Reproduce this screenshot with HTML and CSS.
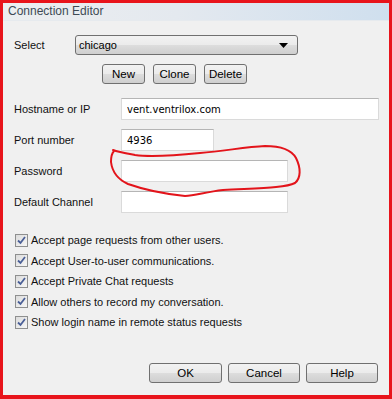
FILE: index.html
```html
<!DOCTYPE html>
<html lang="en">
<head>
  <meta charset="UTF-8">
  <title>Connection Editor</title>
  <link rel="stylesheet" href="styles.css">
</head>
<body>
  <div class="window">
    <!-- Title bar -->
    <div class="titlebar">Connection Editor</div>

    <div class="content">
      <div class="select-row">
        <span class="label select-label">Select</span>
        <div class="combo">
          <span>chicago</span>
          <svg class="combo-arrow" width="9" height="5" viewBox="0 0 9 5"><path d="M0 0h9L4.5 5z" fill="#000"/></svg>
        </div>
      </div>

      <div class="btn-row">
        <button class="btn">New</button>
        <button class="btn">Clone</button>
        <button class="btn">Delete</button>
      </div>

      <div class="fields">
        <label class="label" for="host">Hostname or IP</label>
        <input class="field field-long" type="text" id="host" value="vent.ventrilox.com">

        <label class="label" for="port">Port number</label>
        <input class="field field-short" type="text" id="port" value="4936">

        <label class="label" for="pass">Password</label>
        <input class="field field-mid" type="password" id="pass">

        <label class="label" for="chan">Default Channel</label>
        <input class="field field-mid" type="text" id="chan">
      </div>

      <div class="checks">
        <div class="check"><span class="box"><svg width="9" height="9" viewBox="0 0 9 9"><path d="M1 4.5l2.5 2.5L8 1" fill="none" stroke="#4a5f97" stroke-width="1.8"/></svg></span>Accept page requests from other users.</div>
        <div class="check"><span class="box"><svg width="9" height="9" viewBox="0 0 9 9"><path d="M1 4.5l2.5 2.5L8 1" fill="none" stroke="#4a5f97" stroke-width="1.8"/></svg></span>Accept User-to-user communications.</div>
        <div class="check"><span class="box"><svg width="9" height="9" viewBox="0 0 9 9"><path d="M1 4.5l2.5 2.5L8 1" fill="none" stroke="#4a5f97" stroke-width="1.8"/></svg></span>Accept Private Chat requests</div>
        <div class="check"><span class="box"><svg width="9" height="9" viewBox="0 0 9 9"><path d="M1 4.5l2.5 2.5L8 1" fill="none" stroke="#4a5f97" stroke-width="1.8"/></svg></span>Allow others to record my conversation.</div>
        <div class="check"><span class="box"><svg width="9" height="9" viewBox="0 0 9 9"><path d="M1 4.5l2.5 2.5L8 1" fill="none" stroke="#4a5f97" stroke-width="1.8"/></svg></span>Show login name in remote status requests</div>
      </div>

      <div class="bottom-row">
        <button class="btn btn-ok">OK</button>
        <button class="btn btn-wide">Cancel</button>
        <button class="btn btn-wide">Help</button>
      </div>
    </div>

    <!-- hand drawn marker around the password box -->
    <svg class="scribble" width="392" height="399" viewBox="0 0 392 399">
      <path d="M113 150 C118 152 124 153 135 155 C150 157 170 156 200 153 C225 151 245 147 265 146 C280 146 291 149 296 158 C301 168 301 178 295 183 C285 188 260 188 223 190 C205 192 195 196 185 196 C165 194 145 190 128 184 C117 179 112 170 111 162 C111 157 112 153 114 151"
        fill="none" stroke="#e3141b" stroke-width="2" stroke-linecap="round"/>
    </svg>
  </div>
</body>
</html>
```

FILE: styles.css
```css
body {
  margin: 0;
  padding: 0;
  font-family: "Liberation Sans", Arial, sans-serif;
  font-size: 11px;
  color: #000;
}

.window {
  position: relative;
  width: 392px;
  height: 399px;
  box-sizing: border-box;
  border: 3px solid #e8141b;
  border-bottom-width: 4px;
  background-color: #f0f0f0;
}

.titlebar {
  height: 17px;
  line-height: 16px;
  padding-left: 5px;
  font-size: 12px;
  color: #3e4a55;
  background: linear-gradient(to right, #eceef0 0%, #e4e9ef 45%, #cfdfee 100%);
  border-bottom: 1px solid #e6eaee;
}

.content {
  padding: 14px 11px 0 11px;
}

.label {
  font-size: 11px;
  color: #111;
}

/* select row */
.select-row {
  display: flex;
  align-items: center;
  height: 20px;
}

.select-label {
  width: 61px;
}

.combo {
  width: 223px;
  height: 20px;
  box-sizing: border-box;
  border: 1px solid #707070;
  border-radius: 3px;
  background: linear-gradient(#f2f2f2 0%, #ebebeb 50%, #dddddd 51%, #cfcfcf 100%);
  display: flex;
  align-items: center;
  justify-content: space-between;
  padding: 0 9px 0 3px;
}

.combo-arrow {
  display: block;
}

/* buttons */
.btn {
  height: 20px;
  box-sizing: border-box;
  border: 1px solid #707070;
  border-radius: 3px;
  background: linear-gradient(#f2f2f2 0%, #ebebeb 50%, #dddddd 51%, #cfcfcf 100%);
  font-family: "Liberation Sans", Arial, sans-serif;
  font-size: 11.5px;
  color: #000;
  padding: 0;
}

.btn-row {
  display: flex;
  gap: 8px;
  margin-top: 9px;
  padding-left: 88px;
}

.btn-row .btn {
  width: 43px;
}

/* text fields */
.fields {
  display: grid;
  grid-template-columns: 107px auto;
  row-gap: 9px;
  margin-top: 14px;
  align-items: center;
}

.field {
  height: 22px;
  box-sizing: border-box;
  border: 1px solid #dadada;
  border-top-color: #b5b5b5;
  background: #fff;
  font-family: "DejaVu Sans", sans-serif;
  font-size: 10px;
  padding: 0 5px;
  outline: none;
}

.field-long { width: 258px; }
.field-short { width: 93px; }
.field-mid { width: 167px; }

/* checkboxes */
.checks {
  margin-top: 17px;
}

.check {
  display: flex;
  align-items: center;
  height: 20.5px;
  font-size: 11px;
  color: #111;
}

.box {
  width: 13px;
  height: 13px;
  box-sizing: border-box;
  border: 1px solid #8e8f8f;
  background: linear-gradient(135deg, #dcdcdc 0%, #f6f6f6 100%);
  margin: 0 3px 0 1px;
  display: flex;
  align-items: center;
  justify-content: center;
}

.box svg {
  display: block;
}

/* dialog buttons */
.bottom-row {
  display: flex;
  justify-content: flex-end;
  gap: 6px;
  margin-top: 30px;
}

.btn-ok { width: 73px; }
.btn-wide { width: 72px; }

.scribble {
  position: absolute;
  left: -3px;
  top: -3px;
  pointer-events: none;
}
```
